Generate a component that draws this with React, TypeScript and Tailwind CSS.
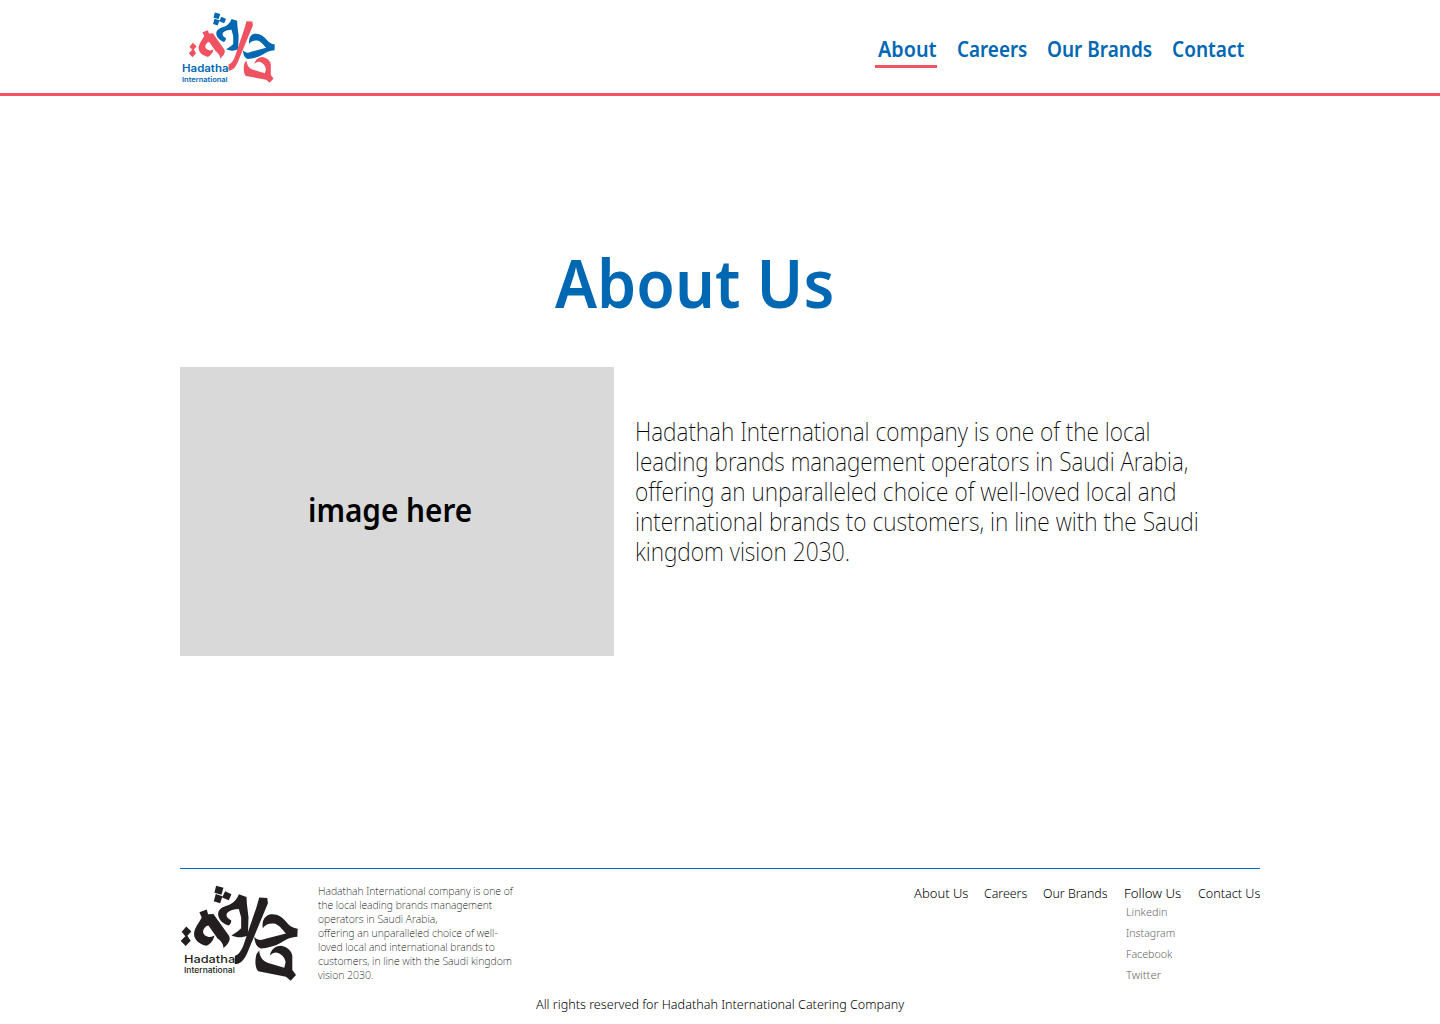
import { useLayoutEffect, useRef, useState } from 'react';

function LogoMark({ blue, red, className }: { blue: string; red: string; className: string }) {
  return (
    <svg viewBox="17 14 350 289" preserveAspectRatio="none" className={className} aria-hidden="true">
      <g className={blue}>
        <path d="M122 16 144 22 138 43 117 37ZM149 33 168 42 160 60 140 52ZM121 41 141 48 134 69 115 63Z" />
        <path d="M190 42 213 50 214 70 219 112 217 166 C202 173 184 173 168 166 L187 153 197 144 197 112 190 86 C176 86 162 90 155 98 C150 107 156 114 167 120 C168 127 165 132 159 136 C142 130 129 118 128 102 C128 86 142 79 160 74 C176 67 185 56 190 42Z" />
        <path d="M262 144 C258 124 266 108 282 103 C302 99 320 109 334 128 C343 139 352 144 366 146 L365 170 C344 171 328 180 316 188 C296 199 274 204 256 205 C243 202 238 188 236 170 C246 182 258 181 270 176 L331 160 C320 148 308 131 294 130 C278 129 268 134 262 144Z" />
      </g>
      <g className={red}>
        <path d="M33 139 48 154 36 167 46 182 31 198 16 182 30 168 19 155Z" />
        <path d="M72 96 94 88 98 102 114 101 L160 166 C167 178 160 190 144 204 C144 190 136 182 126 174 L99 136 92 138 C82 148 80 156 88 165 C98 172 108 172 117 166 C114 182 104 192 94 197 C72 192 57 180 56 162 C56 146 68 132 79 112Z" />
        <path d="M251 52 275 53 277 69 222 202 C212 228 204 246 184 252 L178 252 178 228 C190 224 197 212 203 198 L243 80Z" />
        <path d="M251 211 C252 226 258 242 278 249 L326 263 330 246 C328 230 314 219 302 217 C294 217 289 221 283 226 C287 209 298 197 316 197 C334 200 348 212 350 228 L350 270 361 285 345 302 331 290 248 274 C238 264 238 238 243 222Z" />
      </g>
    </svg>
  );
}

/* Text condensed or widened horizontally to occupy a set width. */
function Fit({ text, width }: { text: string; width: number }) {
  const ref = useRef<HTMLSpanElement>(null);
  const [scale, setScale] = useState(1);
  useLayoutEffect(() => {
    const el = ref.current;
    if (el) setScale(width / el.offsetWidth);
  }, [text, width]);
  return (
    <span className="block whitespace-nowrap" style={{ width }}>
      <span ref={ref} className="inline-block origin-left" style={{ transform: `scaleX(${scale})` }}>
        {text}
      </span>
    </span>
  );
}

const mainLinks: [string, number][] = [['About', 58.5], ['Careers', 70], ['Our Brands', 105], ['Contact', 72.5]];

const paragraph: [string, number][] = [
  ['Hadathah International company is one of the local', 515.5],
  ['leading brands management operators in Saudi Arabia,', 553],
  ['offering an unparalleled choice of well-loved local and', 541],
  ['international brands to customers, in line with the Saudi', 563.5],
  ['kingdom vision 2030.', 215],
];

const blurb: [string, number][] = [
  ['Hadathah International company is one of', 194.5],
  ['the local leading brands management', 174],
  ['operators in Saudi Arabia,', 119],
  ['offering an unparalleled choice of well-', 179.5],
  ['loved local and international brands to', 177],
  ['customers, in line with the Saudi kingdom', 194],
  ['vision 2030.', 55.5],
];

const footerLinks: [string, number][] = [['About Us', 54], ['Careers', 43], ['Our Brands', 65], ['Follow Us', 57], ['Contact Us', 62.5]];
const socialLinks: [string, number][] = [['Linkedin', 41.5], ['Instagram', 49], ['Facebook', 46.5], ['Twitter', 35]];

export default function App() {
  return (
    <div className="flex h-[1024px] w-[1440px] flex-col overflow-hidden bg-white font-['Noto_Sans',sans-serif] text-black">
      <header className="flex h-24 items-start justify-between border-b-3 border-[#ef5261] px-[180px]">
        <div className="relative h-[93px] w-[100px]">
          <LogoMark blue="fill-[#0067b3]" red="fill-[#ef5261]" className="mt-3 ml-[9px] h-[71px] w-[86px]" />
          <div className="absolute top-[62px] left-[2px] font-['Inter',sans-serif] font-semibold text-[#0067b3]">
            <div className="text-[10px] leading-[13px]"><Fit text="Hadatha" width={47} /></div>
            <div className="text-[6.5px] leading-[10px]"><Fit text="International" width={46} /></div>
          </div>
        </div>
        <nav className="mt-[33px] mr-4 flex gap-5 text-[21px] leading-8 font-semibold text-[#0067b3]">
          {mainLinks.map(([label, width]) => (
            <a key={label} className="relative">
              <Fit text={label} width={width} />
              {label === 'About' && <span className="absolute top-8 -left-[3px] h-[3px] w-[62px] bg-[#ef5261]" />}
            </a>
          ))}
        </nav>
      </header>
      <main className="flex h-[772px] flex-col">
        <h1 className="mt-[138px] ml-[555px] text-[66px] leading-[96px] font-semibold text-[#0067b3]"><Fit text="About Us" width={279} /></h1>
        <div className="mt-[37px] ml-[180px] flex">
          <div className="flex h-[289px] w-[434px] items-center justify-center bg-[#d9d9d9] pr-[15px] pb-1 text-[33px] font-semibold"><Fit text="image here" width={164} /></div>
          <div className="mt-[49px] ml-[21px] text-[25px] leading-[30px] font-extralight">
            {paragraph.map(([line, width]) => <Fit key={line} text={line} width={width} />)}
          </div>
        </div>
      </main>
      <footer className="mx-[180px] flex h-[156px] flex-col border-t border-[#0067b3]">
        <div className="flex h-[120px]">
          <div className="relative w-[138px]">
            <LogoMark blue="fill-[#231f20]" red="fill-[#231f20]" className="mt-4 ml-[1px] h-[96px] w-[117px]" />
            <div className="absolute top-[84px] left-1 font-['Inter',sans-serif] font-medium text-[#231f20]">
              <div className="text-[11px] leading-[13px]"><Fit text="Hadatha" width={51} /></div>
              <div className="text-[7.5px] leading-[9px]"><Fit text="International" width={51} /></div>
            </div>
          </div>
          <div className="mt-[15px] text-[11px] leading-[14px] font-extralight">
            {blurb.map(([line, width]) => <Fit key={line} text={line} width={width} />)}
          </div>
          <nav className="mt-[14px] ml-auto flex gap-[16.25px] text-[13.5px] leading-5 font-[350]">
            {footerLinks.map(([label, width]) => (
              <div key={label}>
                <Fit text={label} width={width} />
                {label === 'Follow Us' && (
                  <div className="-mt-[2px] pl-[1.5px] text-[11px] leading-[21px] font-light text-[#666]">
                    {socialLinks.map(([name, w]) => <Fit key={name} text={name} width={w} />)}
                  </div>
                )}
              </div>
            ))}
          </nav>
        </div>
        <p className="mx-auto mt-[5px] text-[13.5px] leading-5 font-[350]"><Fit text="All rights reserved for Hadathah International Catering Company" width={368} /></p>
      </footer>
    </div>
  );
}
